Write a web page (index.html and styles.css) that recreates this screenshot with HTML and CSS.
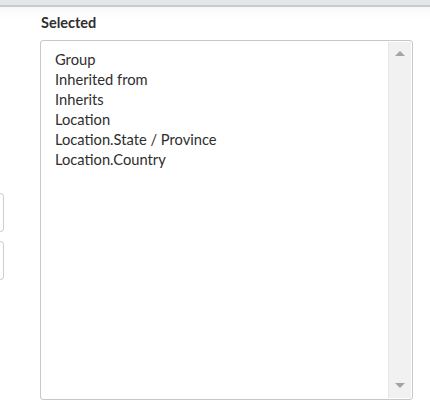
FILE: index.html
```html
<!DOCTYPE html>
<html lang="en">
<head>
    <meta charset="UTF-8">
    <title>Selected</title>
    <link rel="stylesheet" href="styles.css">
</head>
<body>
    <div class="topbar"></div>
    <div class="page">
        <div class="side">
            <div class="side-btn"></div>
            <div class="side-btn"></div>
        </div>
        <div class="slushbucket">
            <div class="label">Selected</div>
            <div class="listbox">
                <ul class="options">
                    <li>Group</li>
                    <li>Inherited from</li>
                    <li>Inherits</li>
                    <li>Location</li>
                    <li>Location.State / Province</li>
                    <li>Location.Country</li>
                </ul>
                <div class="scrollbar">
                    <span class="arrow up"></span>
                    <span class="arrow down"></span>
                </div>
            </div>
        </div>
    </div>
</body>
</html>
```

FILE: styles.css
```css
html, body {
    margin: 0;
    height: 100%;
    overflow: hidden;
}
body {
    font-family: Lato, "Open Sans", sans-serif;
    color: #2e2e2e;
    background: #fff;
}
.topbar {
    height: 5px;
    background: #e4e7ea;
    border-bottom: 2px solid #c8ccd0;
}
.page {
    display: flex;
    height: 394px;
    background: linear-gradient(#f7f8f9, #fff 12px);
}
.side {
    width: 40px;
    display: flex;
    flex-direction: column;
    gap: 9px;
    padding-top: 186px;
}
.side-btn {
    width: 3px;
    height: 37px;
    border: 1px solid #cfcfcf;
    border-left: none;
    border-radius: 0 4px 4px 0;
}
.slushbucket {
    flex: 1;
    padding-right: 17px;
    display: flex;
    flex-direction: column;
}
.label {
    font-size: 14.5px;
    font-weight: bold;
    padding: 7px 0 0 1px;
    height: 26px;
}
.listbox {
    flex: 1;
    display: flex;
    border: 1px solid #c8c8c8;
    border-radius: 3px;
    margin-bottom: 1px;
}
.options {
    flex: 1;
    list-style: none;
    margin: 0;
    padding: 8px 14px;
    font-size: 14.7px;
    line-height: 20px;
}
.scrollbar {
    width: 22px;
    margin: 1px 1px 1px 0;
    background: #f1f1f1;
    border-left: 1px solid #e6e6e6;
    display: flex;
    flex-direction: column;
    justify-content: space-between;
    align-items: center;
    padding: 9px 0 10px;
}
.arrow {
    width: 0;
    height: 0;
    border-left: 5px solid transparent;
    border-right: 5px solid transparent;
}
.arrow.up {
    border-bottom: 5px solid #a3a3a3;
}
.arrow.down {
    border-top: 5px solid #a3a3a3;
}
```
